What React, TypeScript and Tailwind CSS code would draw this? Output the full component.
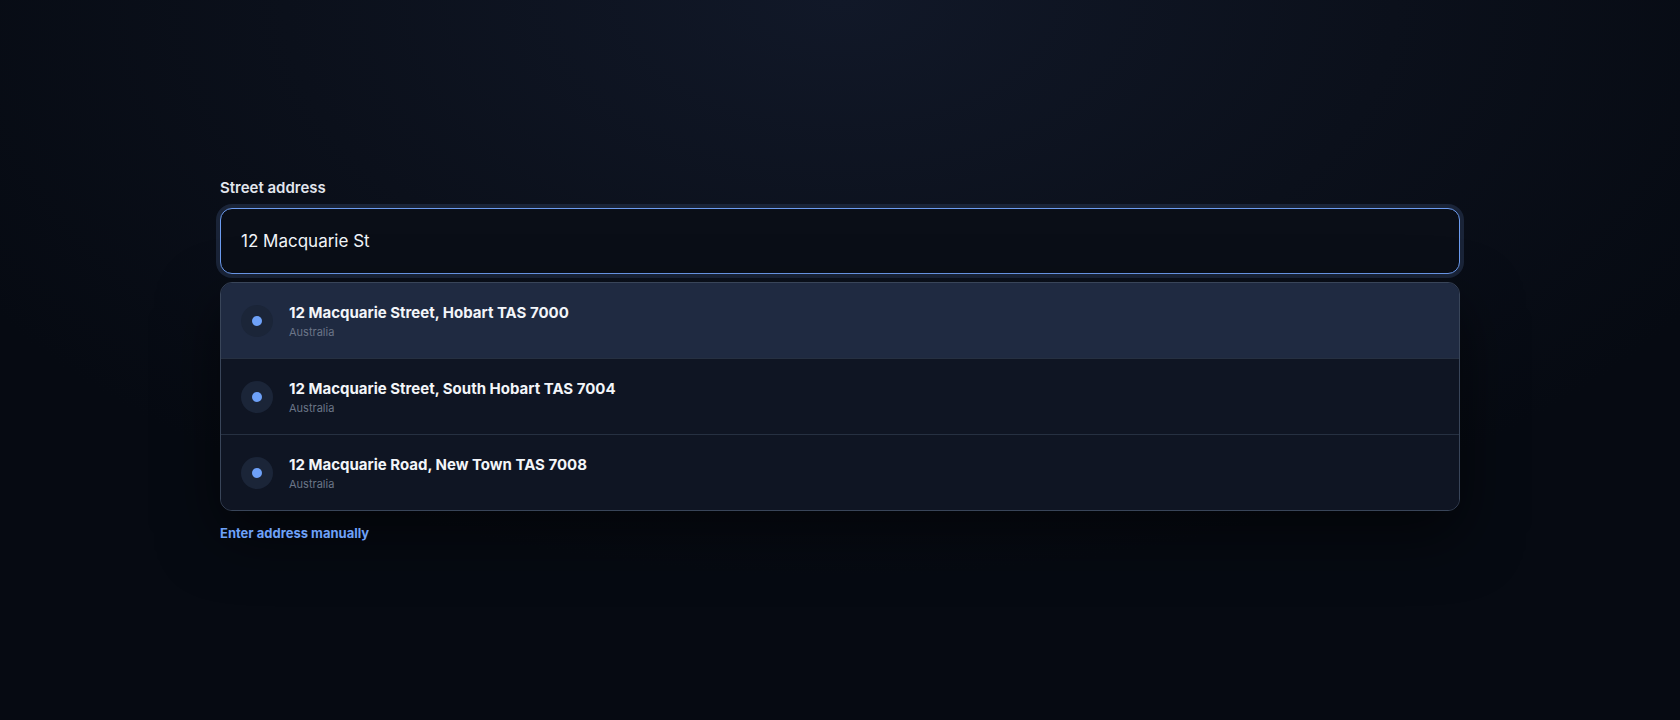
import React, { useState } from "react";

const suggestions = [
  { title: "12 Macquarie Street, Hobart TAS 7000", country: "Australia" },
  { title: "12 Macquarie Street, South Hobart TAS 7004", country: "Australia" },
  { title: "12 Macquarie Road, New Town TAS 7008", country: "Australia" },
];

const App = () => {
  const [query, setQuery] = useState("12 Macquarie St");
  const [active, setActive] = useState(0);

  return (
    <div
      className="min-h-[720px] w-full bg-[#060a12] bg-[radial-gradient(ellipse_60%_80%_at_50%_0%,#111828_0%,#0b101b_55%,#060a12_100%)] pt-[178px]"
      style={{ fontFamily: "Inter, 'Noto Sans', sans-serif" }}
    >
      <div className="mx-auto w-[1240px]">
        <label className="mb-[10px] block text-[15px] font-semibold leading-5 text-[#e2e6ee]">
          Street address
        </label>

        <input
          type="text"
          value={query}
          onChange={(e) => setQuery(e.target.value)}
          className="block h-[66px] w-full rounded-xl border border-[#6d9cf0] bg-[#0a0e17] px-5 text-[17px] text-[#f1f4f9] ring-4 ring-[#1a2438] outline-none"
        />

        <div className="mt-2 overflow-hidden rounded-xl border border-[#394559] bg-[#0f1523] shadow-[0_24px_60px_rgba(0,0,0,0.55)]">
          {suggestions.map((s, i) => (
            <div
              key={i}
              onMouseEnter={() => setActive(i)}
              className={
                "flex items-center gap-4 px-5 " +
                (i > 0 ? "h-[76px] border-t border-[#263041] " : "h-[75px] ") +
                (active === i ? "bg-[#1f2a41]" : "bg-[#0f1523]")
              }
            >
              <div className="flex h-8 w-8 shrink-0 items-center justify-center rounded-full bg-[#1b2538]">
                <div className="h-2.5 w-2.5 rounded-full bg-[#6ea1f8]" />
              </div>
              <div className="flex flex-col">
                <span className="text-[15px] font-bold leading-[23px] text-[#f3f5f9]">
                  {s.title}
                </span>
                <span className="text-[11px] leading-4 text-[#6b7588]">
                  {s.country}
                </span>
              </div>
            </div>
          ))}
        </div>

        <button className="mt-3 text-[13px] font-bold leading-5 text-[#6ea1f8]">
          Enter address manually
        </button>
      </div>
    </div>
  );
};

export default App;
